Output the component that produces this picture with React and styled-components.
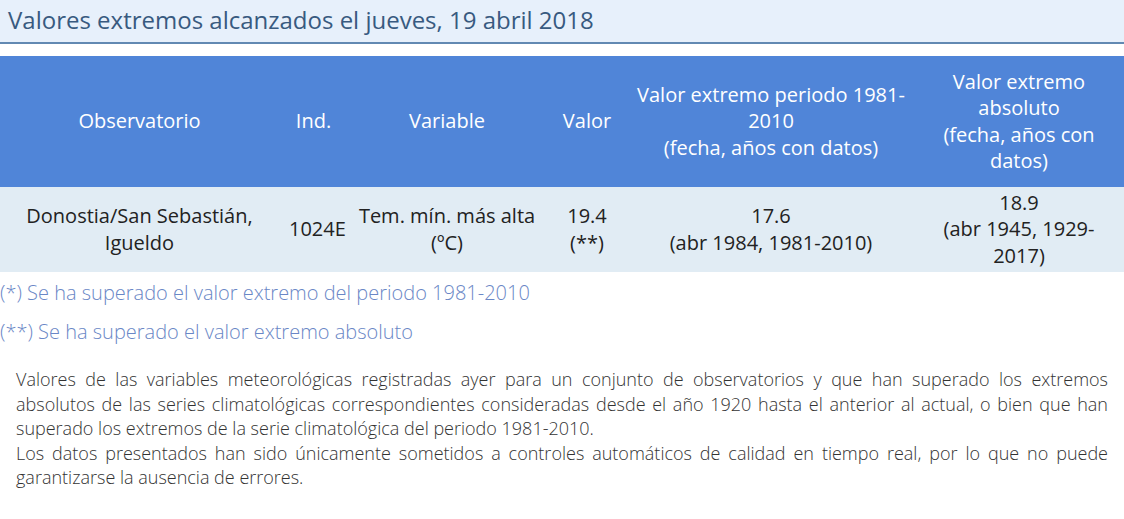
import React from "react";
import styled, { createGlobalStyle } from "styled-components";

const Global = createGlobalStyle`
  html, body { margin: 0; padding: 0; background: #fff; }
  body { font-family: "Open Sans", "Noto Sans", sans-serif; color: #333; }
`;

const Page = styled.div`
  width: 1124px;
  display: flex;
  flex-direction: column;
`;

const TitleBar = styled.h2`
  margin: 0;
  height: 44px;
  box-sizing: border-box;
  padding: 4px 8px 0;
  background: #e7f0fb;
  border-bottom: 2px solid #6289b2;
  color: #385a80;
  font-size: 24px;
  font-weight: 400;
  line-height: 32px;
`;

const Table = styled.table`
  margin-top: 12px;
  width: 1124px;
  border-collapse: collapse;
  table-layout: fixed;
  font-size: 20px;
  line-height: 26.5px;
`;

const Th = styled.th`
  background: #5085d8;
  color: #fff;
  font-weight: 400;
  text-align: center;
  vertical-align: middle;
  padding: 0 8px;
  height: 131px;
`;

const Td = styled.td`
  background: #e1ecf4;
  color: #222;
  text-align: center;
  vertical-align: middle;
  padding: 0 10px;
  height: 85px;
`;

const Notes = styled.div`
  display: flex;
  flex-direction: column;
  gap: 12px;
  padding-top: 7px;
`;

const Note = styled.p`
  margin: 0;
  color: #6a87c6;
  font-size: 20px;
  line-height: 27px;
  font-weight: 300;
`;

const Desc = styled.div`
  padding: 22px 16px 0 16px;
  color: #333;
  font-size: 18px;
  line-height: 24.6px;
  font-weight: 300;
  text-align: justify;
`;

const DescLine = styled.p`
  margin: 0;
`;

const cols = [279, 69, 198, 82, 286, 210];

export default function App() {
  return (
    <>
      <Global />
      <Page>
        <TitleBar>Valores extremos alcanzados el jueves, 19 abril 2018</TitleBar>
        <Table>
          <colgroup>
            {cols.map((w, i) => (
              <col key={i} style={{ width: w }} />
            ))}
          </colgroup>
          <thead>
            <tr>
              <Th>Observatorio</Th>
              <Th>Ind.</Th>
              <Th>Variable</Th>
              <Th>Valor</Th>
              <Th>
                Valor extremo periodo 1981-2010
                <br />
                (fecha, años con datos)
              </Th>
              <Th>
                Valor extremo absoluto
                <br />
                (fecha, años con datos)
              </Th>
            </tr>
          </thead>
          <tbody>
            <tr>
              <Td>Donostia/San Sebastián, Igueldo</Td>
              <Td>1024E</Td>
              <Td>Tem. mín. más alta (ºC)</Td>
              <Td>
                19.4
                <br />
                (**)
              </Td>
              <Td>
                17.6
                <br />
                (abr 1984, 1981-2010)
              </Td>
              <Td>
                18.9
                <br />
                (abr 1945, 1929-2017)
              </Td>
            </tr>
          </tbody>
        </Table>
        <Notes>
          <Note>(*) Se ha superado el valor extremo del periodo 1981-2010</Note>
          <Note>(**) Se ha superado el valor extremo absoluto</Note>
        </Notes>
        <Desc>
          <DescLine>
            Valores de las variables meteorológicas registradas ayer para un conjunto de observatorios y que han superado los extremos absolutos de las series climatológicas correspondientes consideradas desde el año 1920 hasta el anterior al actual, o bien que han superado los extremos de la serie climatológica del periodo 1981-2010.
          </DescLine>
          <DescLine>
            Los datos presentados han sido únicamente sometidos a controles automáticos de calidad en tiempo real, por lo que no puede garantizarse la ausencia de errores.
          </DescLine>
        </Desc>
      </Page>
    </>
  );
}
